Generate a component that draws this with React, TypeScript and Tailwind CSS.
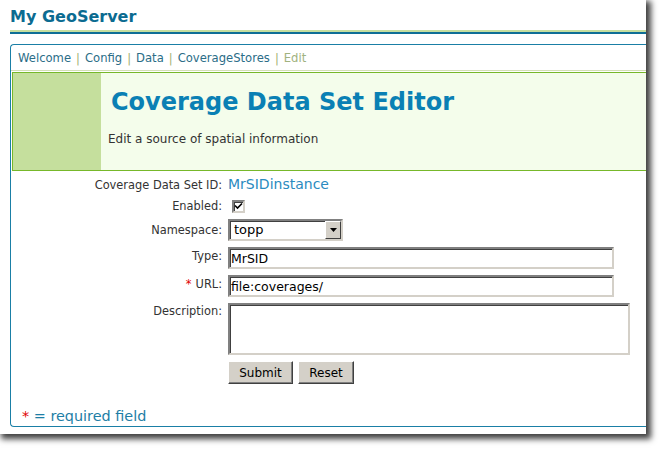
import React from "react";

const inset =
  "border-2 border-t-[#808080] border-l-[#808080] border-b-[#d4d0c8] border-r-[#d4d0c8] shadow-[inset_1px_1px_0_#404040] bg-white";

function Btn({ label, w }: { label: string; w: string }) {
  return (
    <button
      type="button"
      className={`${w} h-[23px] bg-[#d4d0c8] border border-t-white border-l-white border-b-[#404040] border-r-[#404040] shadow-[inset_-1px_-1px_0_#808080] text-[12px] leading-[16px] text-black flex items-center justify-center`}
    >
      {label}
    </button>
  );
}

function Label({ children, pt = "" }: { children: React.ReactNode; pt?: string }) {
  return (
    <div className={`w-[211px] shrink-0 text-right text-[11.4px] leading-[16px] text-[#333] whitespace-nowrap ${pt}`}>
      {children}
    </div>
  );
}

function Sep() {
  return <span className="text-[#9fb172] mx-[5px]">|</span>;
}

export default function App() {
  return (
    <div className="w-[659px] h-[449px] bg-white overflow-hidden font-['DejaVu_Sans',sans-serif]">
      <div className="w-[646px] h-[434px] bg-white overflow-hidden shadow-[3px_3px_6px_2px_rgba(0,0,0,0.75)]">
        <div className="pl-[10px] pt-[7px]">
          <div className="text-[16px] leading-[20px] font-bold text-[#0b6b91]">My GeoServer</div>
          <div className="mt-[3px] h-[2px] bg-[#c6dea0]" />
          <div className="h-[2px] bg-[#0e6e96]" />
          <div className="mt-[10px] w-[660px] border border-r-0 border-[#1a7fa6] rounded-l-[4px]">
            <div className="h-[25px] pt-[5px] pl-[7px] text-[11.6px] leading-[16px] text-[#2b6d87] whitespace-nowrap">
              <span>Welcome</span>
              <Sep />
              <span>Config</span>
              <Sep />
              <span>Data</span>
              <Sep />
              <span>CoverageStores</span>
              <Sep />
              <span className="text-[#a1b27f]">Edit</span>
            </div>
            <div className="h-[1px] bg-[#d3dfb6]" />
            <div className="h-[1px]" />
            <div className="ml-[1px] h-[99px] border border-r-0 border-[#77b82a] bg-[#f4fdeb] flex">
              <div className="w-[88px] bg-[#c5df9d]" />
              <div className="pl-[7px]">
                <div className="mt-[15px] pl-[3px] text-[24px] leading-[28px] font-bold text-[#0a80b4]">
                  Coverage Data Set Editor
                </div>
                <div className="mt-[15px] text-[12px] leading-[16px] text-[#333]">
                  Edit a source of spatial information
                </div>
              </div>
            </div>
            <div className="flex flex-col">
              <div className="mt-[4px] h-[18px] flex items-baseline gap-[6px]">
                <Label>Coverage Data Set ID:</Label>
                <div className="text-[14px] leading-[18px] text-[#2a8bc0]">MrSIDinstance</div>
              </div>
              <div className="mt-[5px] h-[16px] flex gap-[6px]">
                <Label>Enabled:</Label>
                <div className={`mt-[2px] ml-[4px] w-[13px] h-[13px] ${inset} flex items-center justify-center`}>
                  <svg width="9" height="9" viewBox="0 0 9 9">
                    <path d="M1 3.5 L3.5 6 L8 1.5" stroke="#000" strokeWidth="1.6" fill="none" />
                  </svg>
                </div>
              </div>
              <div className="mt-[5px] h-[22px] flex gap-[6px]">
                <Label pt="pt-[3px]">Namespace:</Label>
                <div className={`w-[115px] h-[22px] ${inset} flex items-stretch`}>
                  <div className="flex-1 pl-[4px] text-[13px] leading-[17px] text-black">topp</div>
                  <div className="w-[16px] bg-[#d4d0c8] border border-t-white border-l-white border-b-[#404040] border-r-[#404040] flex items-center justify-center">
                    <svg width="7" height="4" viewBox="0 0 7 4">
                      <path d="M0 0 H7 L3.5 4 Z" fill="#000" />
                    </svg>
                  </div>
                </div>
              </div>
              <div className="mt-[6px] h-[22px] flex gap-[6px]">
                <Label pt="pt-[1px]">Type:</Label>
                <input
                  readOnly
                  defaultValue="MrSID"
                  className={`w-[386px] h-[22px] ${inset} px-[1px] text-[12.5px] text-black outline-none`}
                />
              </div>
              <div className="mt-[6px] h-[22px] flex gap-[6px]">
                <Label pt="pt-[1px]">
                  <span className="text-[#e00000] mr-[4px]">*</span>URL:
                </Label>
                <input
                  readOnly
                  defaultValue="file:coverages/"
                  className={`w-[386px] h-[22px] ${inset} px-[1px] text-[12.5px] text-black outline-none`}
                />
              </div>
              <div className="mt-[6px] h-[52px] flex gap-[6px]">
                <Label>Description:</Label>
                <textarea readOnly className={`w-[402px] h-[52px] ${inset} resize-none outline-none`} />
              </div>
              <div className="mt-[6px] h-[23px] flex gap-[6px]">
                <div className="w-[211px] shrink-0" />
                <div className="flex gap-[5px]">
                  <Btn label="Submit" w="w-[65px]" />
                  <Btn label="Reset" w="w-[56px]" />
                </div>
              </div>
              <div className="mt-[23px] pl-[11px] text-[14.4px] leading-[18px] text-[#1d7ea6] pb-[1px]">
                <span className="text-[#e00000]">*</span> = required field
              </div>
            </div>
          </div>
        </div>
      </div>
    </div>
  );
}
